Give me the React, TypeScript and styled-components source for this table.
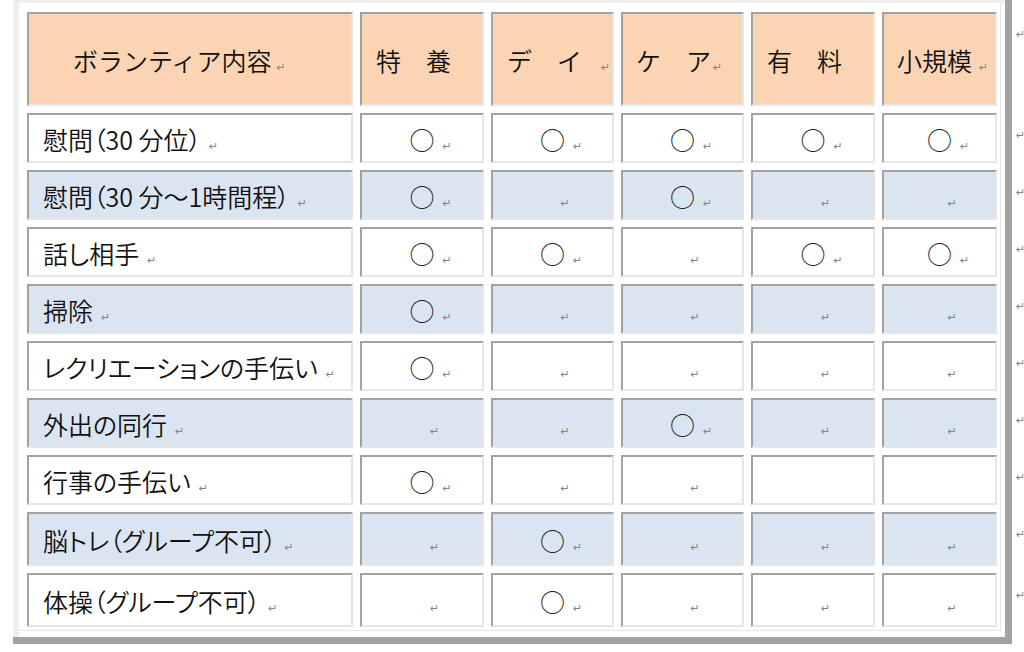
import React from "react";
import styled, { createGlobalStyle } from "styled-components";

const GlobalStyle = createGlobalStyle`
  html, body {
    margin: 0;
    padding: 0;
    background: #ffffff;
  }
  body {
    font-family: "Noto Sans CJK JP", "Noto Sans", sans-serif;
  }
`;

const COLS = "326px 124px 123px 123px 124px 115px 20px";
const PEACH = "#fbd4b4";
const BLUE = "#dbe5f1";
const WHITE = "#ffffff";

const Page = styled.div`
  box-sizing: border-box;
  margin-left: 13px;
  width: 999px;
  height: 644px;
  background: #ffffff;
  border-right: 7px solid #a3a3a3;
  border-bottom: 7px solid #a3a3a3;
`;

const Sheet = styled.div`
  box-sizing: border-box;
  height: 100%;
  border-top: 3px solid #efefef;
  border-left: 6px solid #efefef;
`;

const Table = styled.div`
  box-sizing: border-box;
  width: 982px;
  display: flex;
  flex-direction: column;
  gap: 7px;
  padding: 9px 3px 3px 8px;
  border-right: 1px solid #e4e4e4;
  border-bottom: 1px solid #e4e4e4;
`;

const Row = styled.div<{ $h: number }>`
  display: grid;
  grid-template-columns: ${COLS};
  column-gap: 7px;
  height: ${(p) => p.$h}px;
`;

const Cell = styled.div<{ $bg: string; $center?: boolean; $pad?: number }>`
  box-sizing: border-box;
  background: ${(p) => p.$bg};
  border-top: 2px solid #a2a2a2;
  border-left: 2px solid #a2a2a2;
  border-right: 2px solid #e6e6e6;
  border-bottom: 2px solid #e6e6e6;
  display: flex;
  align-items: center;
  justify-content: ${(p) => (p.$center ? "center" : "flex-start")};
  padding-left: ${(p) => (p.$center ? 0 : p.$pad ?? 14)}px;
  padding-top: 2px;
  color: #111111;
  font-size: 25px;
  font-weight: 350;
  white-space: nowrap;
  overflow: visible;
`;

const HeadText = styled.span`
  font-size: 25px;
  line-height: 1;
`;

const BodyText = styled.span`
  font-size: 25px;
  line-height: 1;
  font-feature-settings: "palt" 1;
`;

const Circle = styled.span`
  font-size: 25px;
  line-height: 1;
  color: #222222;
`;

const Mark = styled.span<{ $gap?: number; $float?: boolean }>`
  display: inline-block;
  width: 8px;
  font-family: "DejaVu Sans", sans-serif;
  font-weight: 400;
  font-size: 11px;
  line-height: 1;
  color: #858585;
  margin-left: ${(p) => p.$gap ?? 7}px;
  margin-right: ${(p) => (p.$float ? -((p.$gap ?? 7) + 8) : 0)}px;
`;

const RowEnd = styled.div`
  padding-left: 12px;
  padding-top: 17px;
  font-family: "DejaVu Sans", sans-serif;
  font-size: 11px;
  line-height: 1;
  color: #858585;
`;

type Header = { text: string; pad: number; mark: number | null };

const headers: Header[] = [
  { text: "ボランティア内容", pad: 44, mark: 5 },
  { text: "特　養", pad: 14, mark: null },
  { text: "デ　イ", pad: 14, mark: 19 },
  { text: "ケ　ア", pad: 13, mark: 2 },
  { text: "有　料", pad: 14, mark: null },
  { text: "小規模", pad: 13, mark: 7 },
];

// 1 = ○, 0 = empty with mark, -1 = empty without mark
const rows: { label: string; h: number; cells: number[] }[] = [
  { label: "慰問（30 分位）", h: 50, cells: [1, 1, 1, 1, 1] },
  { label: "慰問（30 分～1時間程）", h: 50, cells: [1, 0, 1, 0, 0] },
  { label: "話し相手", h: 50, cells: [1, 1, 0, 1, 1] },
  { label: "掃除", h: 50, cells: [1, 0, 0, 0, 0] },
  { label: "レクリエーションの手伝い", h: 50, cells: [1, 0, 0, 0, 0] },
  { label: "外出の同行", h: 50, cells: [0, 0, 1, 0, 0] },
  { label: "行事の手伝い", h: 50, cells: [1, 0, 0, -1, -1] },
  { label: "脳トレ（グループ不可）", h: 54, cells: [0, 1, 0, 0, 0] },
  { label: "体操（グループ不可）", h: 54, cells: [0, 1, 0, 0, 0] },
];

export default function App() {
  return (
    <>
      <GlobalStyle />
      <Page>
        <Sheet>
          <Table>
            <Row $h={94}>
              {headers.map((h, i) => (
                <Cell key={i} $bg={PEACH} $pad={h.pad}>
                  <HeadText>
                    {h.text}
                    {h.mark !== null && <Mark $gap={h.mark}>↵</Mark>}
                  </HeadText>
                </Cell>
              ))}
              <RowEnd>↵</RowEnd>
            </Row>
            {rows.map((r, ri) => {
              const bg = ri % 2 === 1 ? BLUE : WHITE;
              return (
                <Row key={ri} $h={r.h}>
                  <Cell $bg={bg} $pad={14}>
                    <BodyText>
                      {r.label}
                      <Mark $gap={8}>↵</Mark>
                    </BodyText>
                  </Cell>
                  {r.cells.map((c, ci) => (
                    <Cell key={ci} $bg={bg} $center>
                      <BodyText>
                        {c === 1 && <Circle>○</Circle>}
                        {c !== -1 && (
                          <Mark $gap={8} $float>
                            ↵
                          </Mark>
                        )}
                      </BodyText>
                    </Cell>
                  ))}
                  <RowEnd>↵</RowEnd>
                </Row>
              );
            })}
          </Table>
        </Sheet>
      </Page>
    </>
  );
}
